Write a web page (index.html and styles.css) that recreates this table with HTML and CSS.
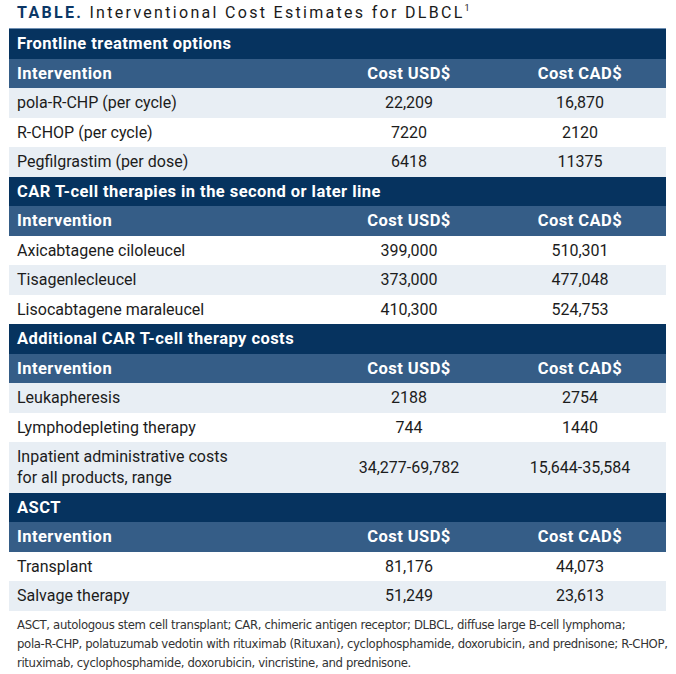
FILE: index.html
```html
<!DOCTYPE html>
<html>
<head>
<meta charset="utf-8">
<link rel="stylesheet" href="styles.css">
</head>
<body>
<div class="page">
  <div class="title"><span class="label">TABLE.</span> Interventional Cost Estimates for DLBCL<sup>1</sup></div>
  <table class="costs">
    <colgroup><col class="c1"><col class="c2"><col class="c3"></colgroup>
    <tbody>
      <tr class="section"><td colspan="3">Frontline treatment options</td></tr>
      <tr class="head"><td>Intervention</td><td class="num">Cost USD$</td><td class="num">Cost CAD$</td></tr>
      <tr class="alt"><td>pola-R-CHP (per cycle)</td><td class="num">22,209</td><td class="num">16,870</td></tr>
      <tr><td>R-CHOP (per cycle)</td><td class="num">7220</td><td class="num">2120</td></tr>
      <tr class="alt"><td>Pegfilgrastim (per dose)</td><td class="num">6418</td><td class="num">11375</td></tr>

      <tr class="section"><td colspan="3">CAR T-cell therapies in the second or later line</td></tr>
      <tr class="head"><td>Intervention</td><td class="num">Cost USD$</td><td class="num">Cost CAD$</td></tr>
      <tr><td>Axicabtagene ciloleucel</td><td class="num">399,000</td><td class="num">510,301</td></tr>
      <tr class="alt"><td>Tisagenlecleucel</td><td class="num">373,000</td><td class="num">477,048</td></tr>
      <tr><td>Lisocabtagene maraleucel</td><td class="num">410,300</td><td class="num">524,753</td></tr>

      <tr class="section"><td colspan="3">Additional CAR T-cell therapy costs</td></tr>
      <tr class="head"><td>Intervention</td><td class="num">Cost USD$</td><td class="num">Cost CAD$</td></tr>
      <tr class="alt"><td>Leukapheresis</td><td class="num">2188</td><td class="num">2754</td></tr>
      <tr><td>Lymphodepleting therapy</td><td class="num">744</td><td class="num">1440</td></tr>
      <tr class="alt"><td>Inpatient administrative costs<br>for all products, range</td><td class="num">34,277-69,782</td><td class="num">15,644-35,584</td></tr>

      <tr class="section"><td colspan="3">ASCT</td></tr>
      <tr class="head"><td>Intervention</td><td class="num">Cost USD$</td><td class="num">Cost CAD$</td></tr>
      <tr><td>Transplant</td><td class="num">81,176</td><td class="num">44,073</td></tr>
      <tr class="alt"><td>Salvage therapy</td><td class="num">51,249</td><td class="num">23,613</td></tr>
    </tbody>
  </table>
  <p class="note">ASCT, autologous stem cell transplant; CAR, chimeric antigen receptor; DLBCL, diffuse large B-cell lymphoma;<br>pola-R-CHP, polatuzumab vedotin with rituximab (Rituxan), cyclophosphamide, doxorubicin, and prednisone; R-CHOP,<br>rituximab, cyclophosphamide, doxorubicin, vincristine, and prednisone.</p>
</div>
</body>
</html>
```

FILE: styles.css
```css
html, body {
  margin: 0;
  padding: 0;
  background: #ffffff;
}

.page {
  width: 657px;
  margin-left: 9px;
  font-family: Roboto, "Liberation Sans", sans-serif;
  color: #1c1c1c;
}

.title {
  box-sizing: border-box;
  height: 29px;
  padding: 3px 0 0 8px;
  font-size: 16px;
  line-height: 19px;
  letter-spacing: 2.3px;
  color: #1a1a1a;
  border-bottom: 1px solid #6f8fb2;
  white-space: nowrap;
}

.title .label {
  font-weight: 700;
  color: #0b3766;
}

.title sup {
  font-size: 9px;
  vertical-align: 7px;
  line-height: 0;
}

.costs {
  width: 657px;
  border-collapse: collapse;
  table-layout: fixed;
  font-size: 16px;
}

.costs col.c1 { width: 315px; }
.costs col.c2 { width: 170px; }
.costs col.c3 { width: 172px; }

.costs td {
  padding: 4.25px 8px;
  line-height: 21px;
  vertical-align: middle;
  white-space: nowrap;
}

.costs td.num {
  text-align: center;
  padding-left: 0;
  padding-right: 0;
}

.costs tr.section td,
.costs tr.head td {
  color: #ffffff;
  font-weight: 700;
  font-size: 16.5px;
  letter-spacing: 0.45px;
}

.costs tr.section td {
  background: #06335f;
}

.costs tr.head td {
  background: #355d87;
}

.costs tr.alt td {
  background: #e8eef4;
}

.note {
  margin: 4px 0 0 8px;
  font-family: "Liberation Sans Narrow", "DejaVu Sans Condensed", sans-serif;
  font-size: 13px;
  letter-spacing: -0.35px;
  line-height: 19px;
  color: #333333;
  white-space: nowrap;
}
```
